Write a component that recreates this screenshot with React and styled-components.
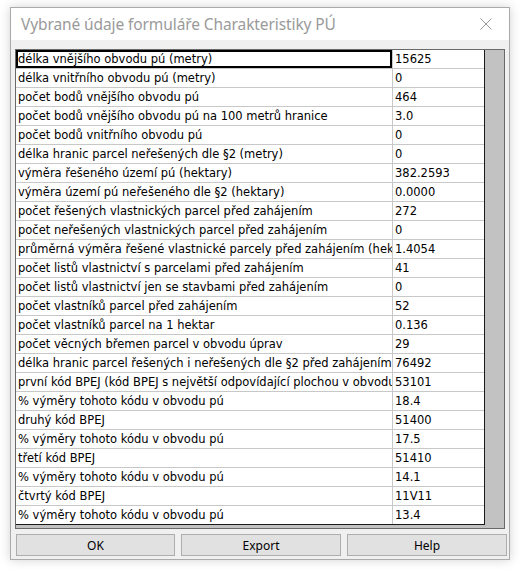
import React from "react";
import styled, { createGlobalStyle } from "styled-components";

const Global = createGlobalStyle`
  html, body { margin: 0; padding: 0; background: #ffffff; }
  #root { width: 520px; height: 572px; }
`;

const rows = [
  ["délka vnějšího obvodu pú (metry)", "15625"],
  ["délka vnitřního obvodu pú (metry)", "0"],
  ["počet bodů vnějšího obvodu pú", "464"],
  ["počet bodů vnějšího obvodu pú na 100 metrů hranice", "3.0"],
  ["počet bodů vnitřního obvodu pú", "0"],
  ["délka hranic parcel neřešených dle §2 (metry)", "0"],
  ["výměra řešeného území pú (hektary)", "382.2593"],
  ["výměra území pú neřešeného dle §2 (hektary)", "0.0000"],
  ["počet řešených vlastnických parcel před zahájením", "272"],
  ["počet neřešených vlastnických parcel před zahájením", "0"],
  ["průměrná výměra řešené vlastnické parcely před zahájením (hektary)", "1.4054"],
  ["počet listů vlastnictví s parcelami před zahájením", "41"],
  ["počet listů vlastnictví jen se stavbami před zahájením", "0"],
  ["počet vlastníků parcel před zahájením", "52"],
  ["počet vlastníků parcel na 1 hektar", "0.136"],
  ["počet věcných břemen parcel v obvodu úprav", "29"],
  ["délka hranic parcel řešených i neřešených dle §2 před zahájením", "76492"],
  ["první kód BPEJ (kód BPEJ s největší odpovídající plochou v obvodu pú)", "53101"],
  ["% výměry tohoto kódu v obvodu pú", "18.4"],
  ["druhý kód BPEJ", "51400"],
  ["% výměry tohoto kódu v obvodu pú", "17.5"],
  ["třetí kód BPEJ", "51410"],
  ["% výměry tohoto kódu v obvodu pú", "14.1"],
  ["čtvrtý kód BPEJ", "11V11"],
  ["% výměry tohoto kódu v obvodu pú", "13.4"],
];

const Window = styled.div`
  position: relative;
  margin: 7px 0 0 10px;
  width: 500px;
  height: 553px;
  box-sizing: border-box;
  border: 1px solid #aaaaaa;
  background: #f0f0f0;
  box-shadow: 0 0 10px rgba(0, 0, 0, 0.18);
  display: flex;
  flex-direction: column;
`;

const TitleBar = styled.div`
  height: 32px;
  background: #ffffff;
  display: flex;
  align-items: center;
  justify-content: space-between;
  padding: 0 0 0 10px;
`;

const Title = styled.span`
  font-family: "Noto Sans", "Open Sans", sans-serif;
  font-size: 15.5px;
  color: #9a9a9a;
  letter-spacing: -0.1px;
`;

const CloseBtn = styled.div`
  width: 46px;
  height: 32px;
  display: flex;
  align-items: center;
  justify-content: center;
`;

const Client = styled.div`
  flex: 1;
  display: flex;
  flex-direction: column;
  padding: 9px 4px 3px 4px;
`;

const GridBox = styled.div`
  height: 480px;
  box-sizing: border-box;
  border: 1px solid #6a6a6a;
  background: #c2c2c2;
  display: flex;
  align-items: flex-start;
`;

const Table = styled.div`
  width: 469px;
  box-sizing: border-box;
  background: #ffffff;
  border-right: 1px solid #1a1a1a;
  border-bottom: 1px solid #1a1a1a;
  display: flex;
  flex-direction: column;
`;

const Row = styled.div`
  display: grid;
  grid-template-columns: 377px 1fr;
  height: 19px;
  box-sizing: border-box;
  border-bottom: 1px solid #c8c8c8;
  &:last-child { border-bottom: none; height: 18px; }
`;

const Cell = styled.div`
  box-sizing: border-box;
  height: 18px;
  line-height: 19px;
  padding-left: 2px;
  font-family: "DejaVu Sans", Tahoma, sans-serif;
  font-size: 11.5px;
  color: #000;
  white-space: nowrap;
  overflow: hidden;
  border-right: ${(p) => (p.$sep ? "1px solid #c8c8c8" : "none")};
  box-shadow: ${(p) => (p.$focus ? "inset 0 0 0 2px #000" : "none")};
`;

const ButtonRow = styled.div`
  margin-top: 5px;
  padding: 0 0 0 1px;
  display: grid;
  grid-template-columns: 159px 160px 160px;
  gap: 6px;
`;

const Button = styled.button`
  height: 22px;
  box-sizing: border-box;
  border: 1px solid #adadad;
  background: #e1e1e1;
  font-family: "Noto Sans", "Open Sans", sans-serif;
  font-size: 12px;
  color: #000;
  padding: 0;
  margin: 0;
`;

export default function App() {
  return (
    <>
      <Global />
      <Window>
        <TitleBar>
          <Title>Vybrané údaje formuláře Charakteristiky PÚ</Title>
          <CloseBtn>
            <svg width="12" height="12" viewBox="0 0 12 12">
              <path d="M0.5 0.5 L11.5 11.5 M11.5 0.5 L0.5 11.5" stroke="#9a9a9a" strokeWidth="1" fill="none" />
            </svg>
          </CloseBtn>
        </TitleBar>
        <Client>
          <GridBox>
            <Table>
              {rows.map(([label, value], i) => (
                <Row key={i}>
                  <Cell $sep $focus={i === 0}>{label}</Cell>
                  <Cell>{value}</Cell>
                </Row>
              ))}
            </Table>
          </GridBox>
          <ButtonRow>
            <Button>OK</Button>
            <Button>Export</Button>
            <Button>Help</Button>
          </ButtonRow>
        </Client>
      </Window>
    </>
  );
}
